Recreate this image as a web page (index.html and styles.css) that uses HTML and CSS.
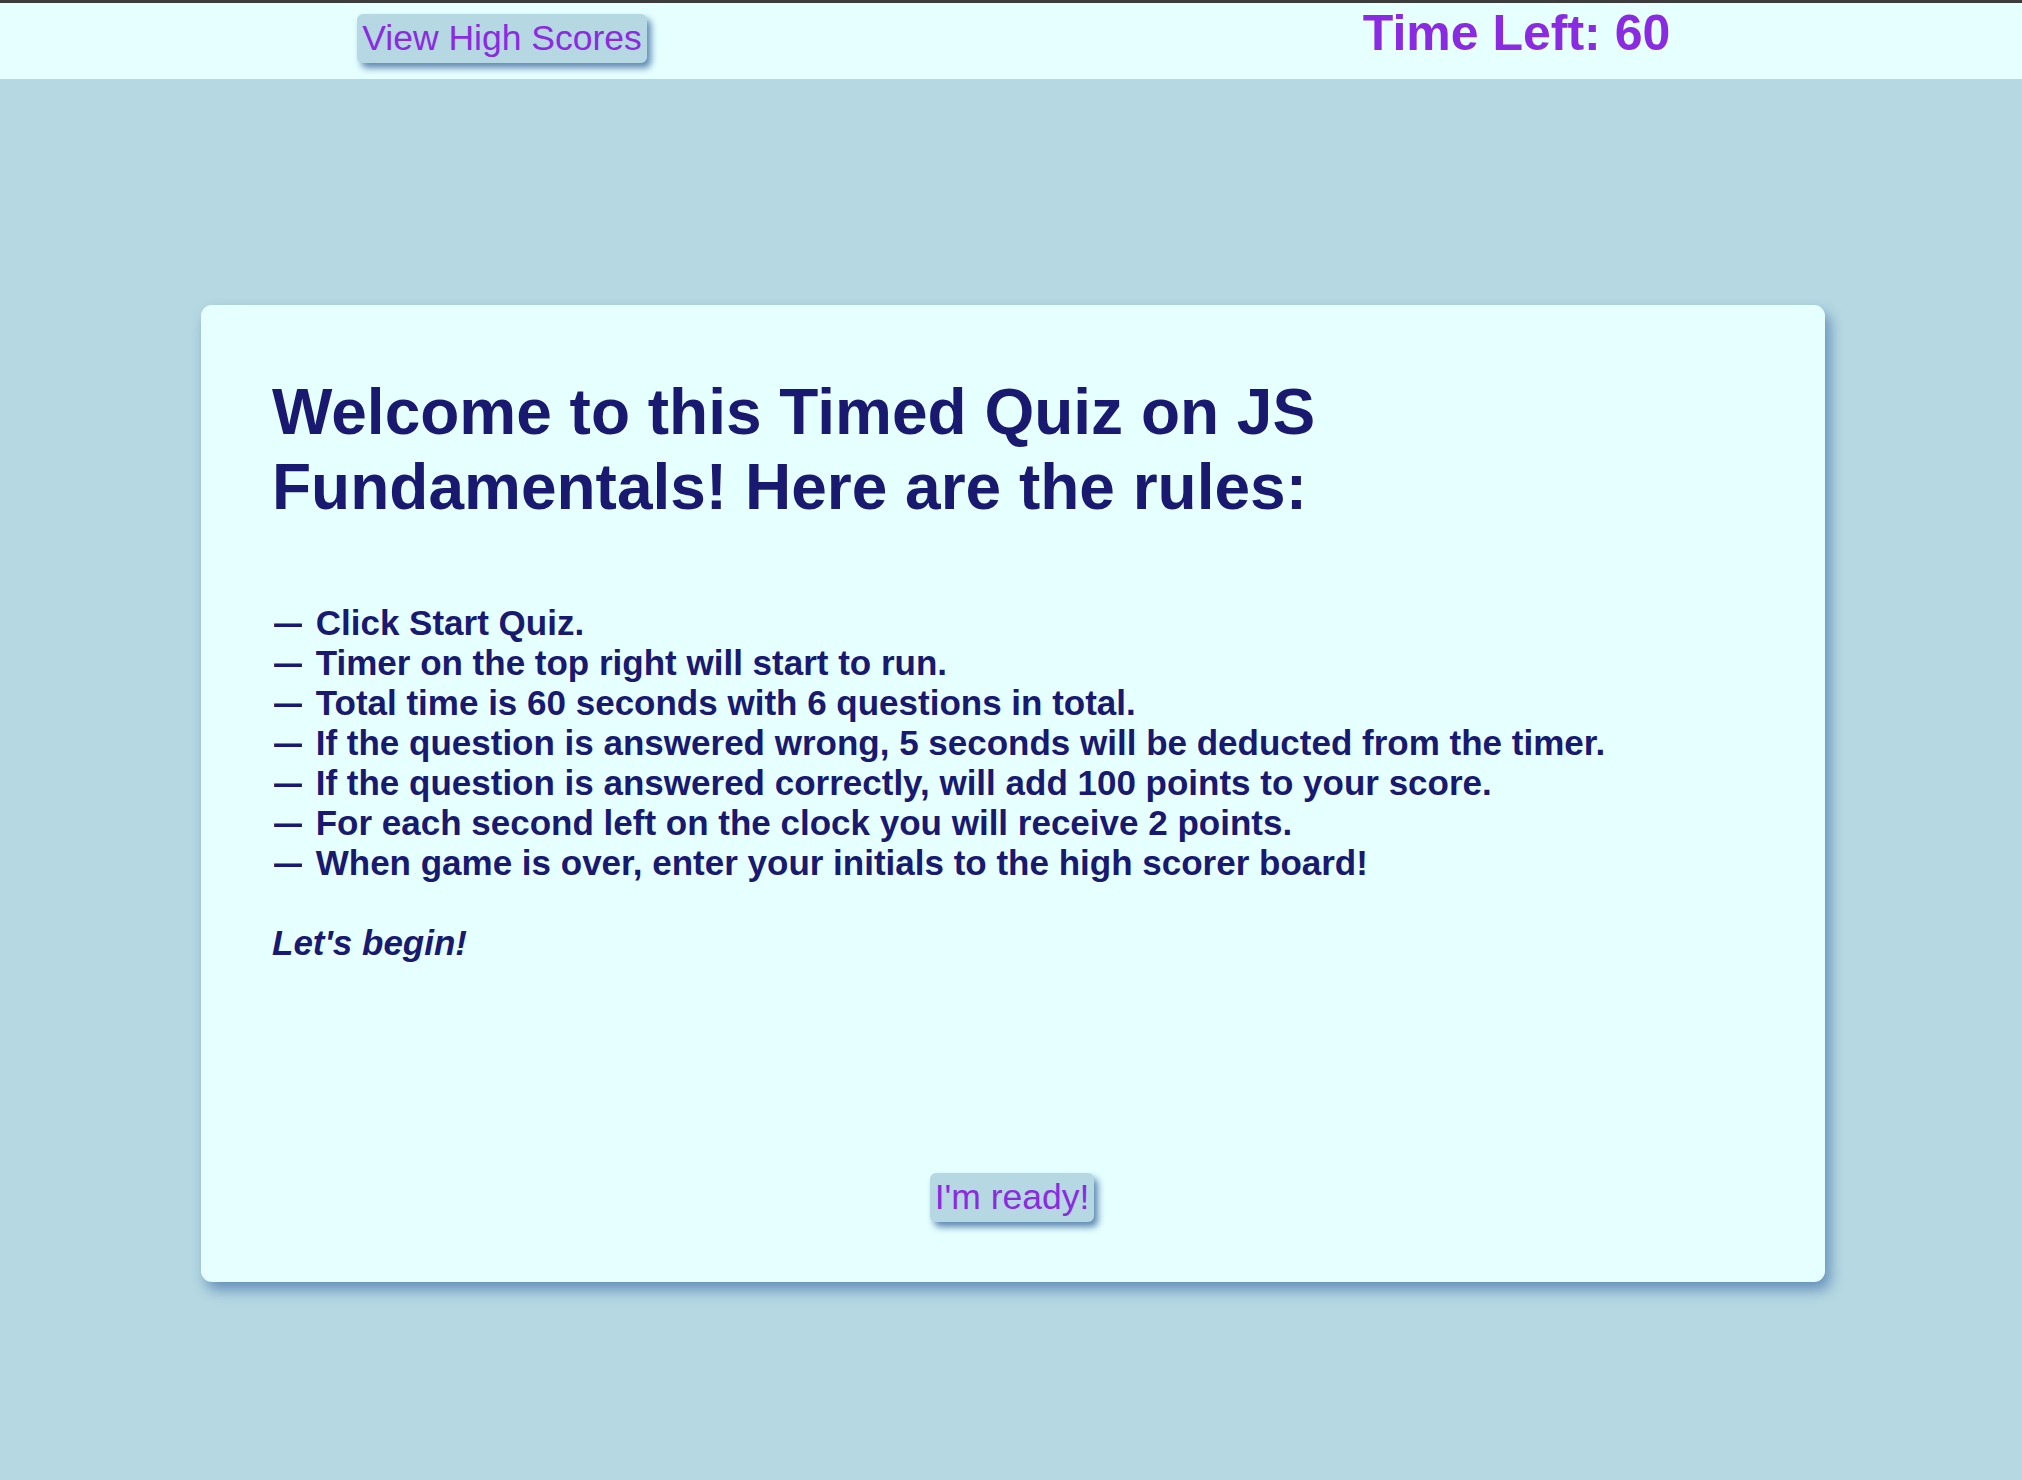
FILE: index.html
```html
<!DOCTYPE html>
<html lang="en">
<head>
<meta charset="utf-8">
<title>Timed Quiz</title>
<link rel="stylesheet" href="styles.css">
</head>
<body>
<header class="topbar">
  <div class="slot slot-left"><button class="btn btn-scores">View High Scores</button></div>
  <div class="slot"><h2 class="timer">Time Left: 60</h2></div>
</header>
<main class="stage">
  <section class="card">
    <h1 class="title">Welcome to this Timed Quiz on JS Fundamentals! Here are the rules:</h1>
    <div class="rules">
      <div class="rule"><span class="dash">—</span> Click Start Quiz.</div>
      <div class="rule"><span class="dash">—</span> Timer on the top right will start to run.</div>
      <div class="rule"><span class="dash">—</span> Total time is 60 seconds with 6 questions in total.</div>
      <div class="rule"><span class="dash">—</span> If the question is answered wrong, 5 seconds will be deducted from the timer.</div>
      <div class="rule"><span class="dash">—</span> If the question is answered correctly, will add 100 points to your score.</div>
      <div class="rule"><span class="dash">—</span> For each second left on the clock you will receive 2 points.</div>
      <div class="rule"><span class="dash">—</span> When game is over, enter your initials to the high scorer board!</div>
    </div>
    <p class="begin">Let's begin!</p>
    <div class="actions">
      <button class="btn btn-ready">I'm ready!</button>
    </div>
  </section>
</main>
</body>
</html>
```
FILE: styles.css
```css
* { box-sizing: border-box; }

html, body {
  margin: 0;
  padding: 0;
}

body {
  background: #b6d8e2;
  font-family: "Liberation Sans", Arial, Helvetica, sans-serif;
  min-height: 1480px;
}

.topbar {
  background: #e6ffff;
  border-top: 3px solid #3c3c3c;
  height: 79px;
  display: grid;
  grid-template-columns: 1fr 1fr;
  align-items: start;
}

.slot {
  display: flex;
  justify-content: center;
}

.slot-left {
  padding-right: 7px;
}

.btn {
  font-family: "Liberation Sans", Arial, Helvetica, sans-serif;
  font-size: 35.5px;
  line-height: 41px;
  color: #8a2be2;
  background: #b6d8e2;
  border: none;
  border-radius: 6px;
  padding: 4px 5px;
  box-shadow: 4px 5px 7px #5f89b4;
  cursor: pointer;
}

.btn-scores {
  margin-top: 11px;
}

.timer {
  margin: 1px 0 0;
  font-size: 50px;
  line-height: 58px;
  font-weight: bold;
  color: #8a2be2;
}

.stage {
  padding-top: 226px;
  padding-left: 4px;
}

.card {
  width: 1624px;
  height: 977px;
  margin: 0 auto;
  background: #e6ffff;
  border-radius: 11px;
  box-shadow: 5px 8px 14px #6690ba;
  padding: 70px 71px 60px 71px;
  display: flex;
  flex-direction: column;
  color: #191970;
}

.title {
  margin: 0;
  font-size: 64px;
  line-height: 75px;
  font-weight: bold;
}

.rules {
  margin-top: 78px;
  padding-left: 2px;
}

.rule {
  font-size: 35px;
  line-height: 40px;
  font-weight: bold;
}

.dash {
  display: inline-block;
  width: 32px;
  transform: scaleX(0.8);
  transform-origin: left center;
}

.begin {
  margin: 40px 0 0;
  font-size: 35px;
  line-height: 40px;
  font-weight: bold;
  font-style: italic;
}

.actions {
  margin-top: auto;
  display: flex;
  justify-content: center;
  padding-right: 2px;
}
```
